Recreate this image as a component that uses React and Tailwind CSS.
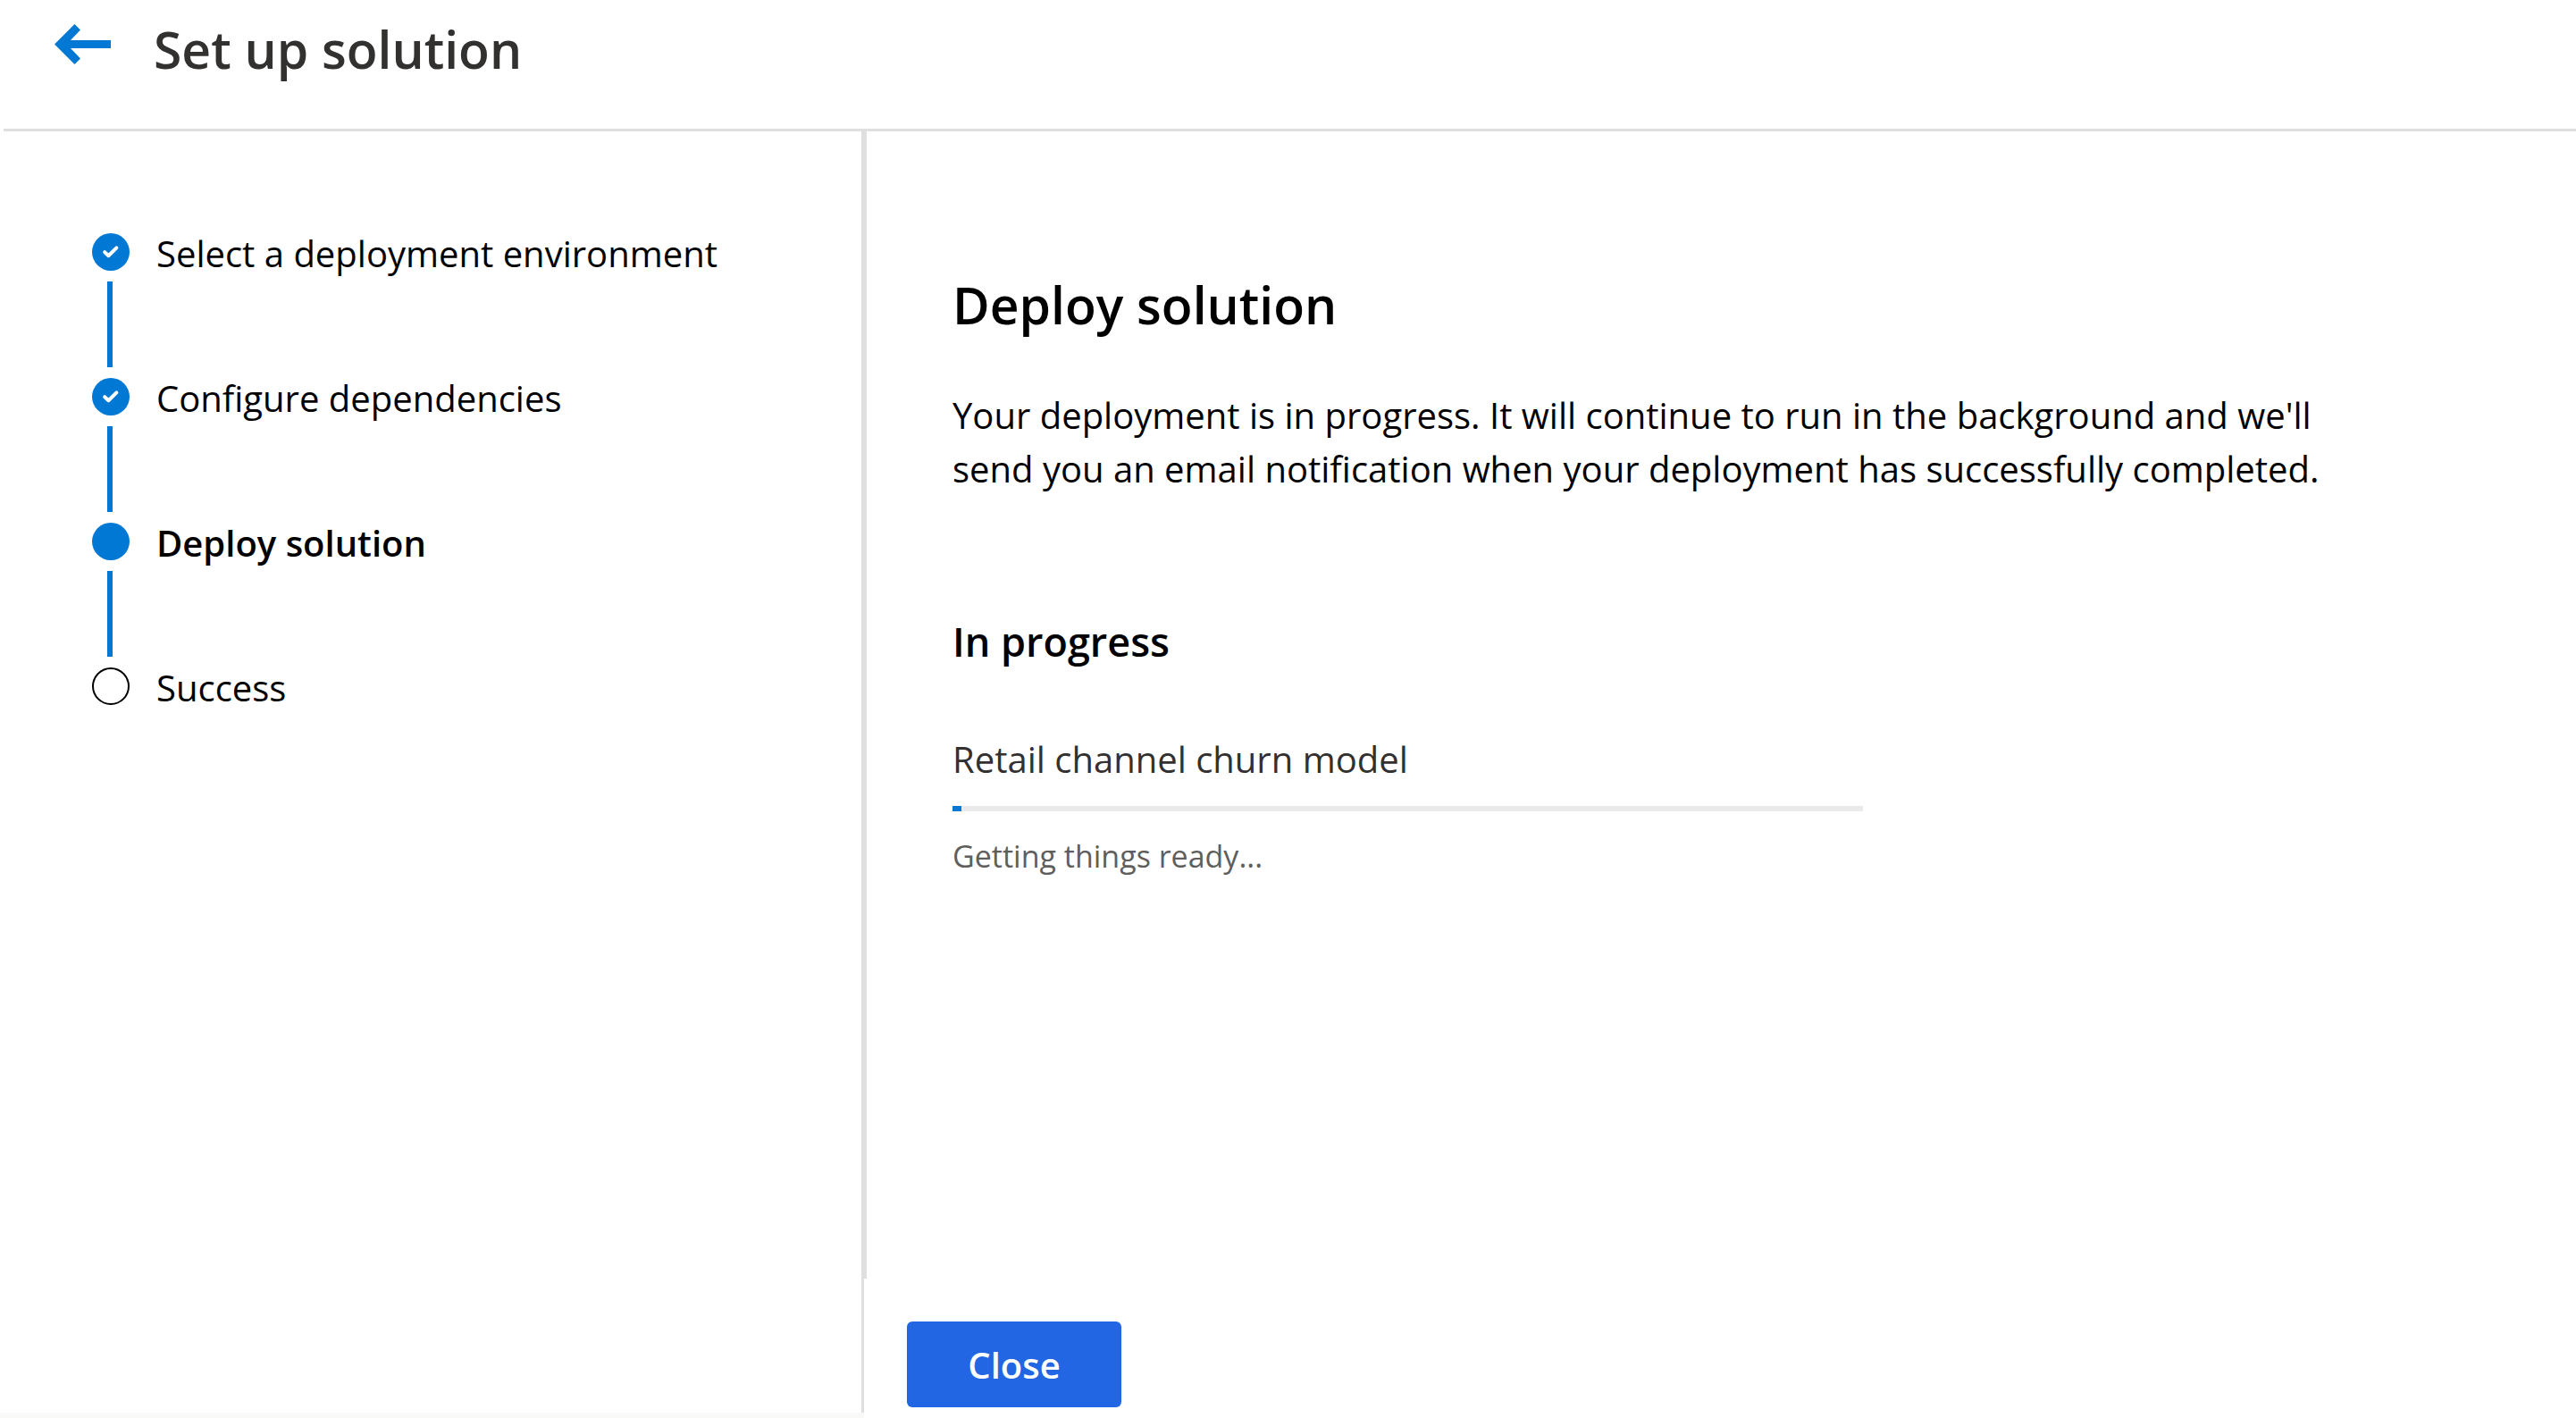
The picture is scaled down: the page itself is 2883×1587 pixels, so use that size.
import React from "react";

const steps = [
  { label: "Select a deployment environment", state: "done" },
  { label: "Configure dependencies", state: "done" },
  { label: "Deploy solution", state: "current" },
  { label: "Success", state: "upcoming" },
];

function BackArrow() {
  return (
    <svg viewBox="0 0 63 45" className="block h-[45px] w-[63px]" fill="#0078d4" aria-hidden="true">
      <polygon points="0,22.5 22.5,0 29,6.5 18,18 63,18 63,27 18,27 29,38.5 22.5,45" />
    </svg>
  );
}

function StepMarker({ state }) {
  if (state === "upcoming") {
    return <span className="block size-[42px] rounded-full border-2 border-black" />;
  }
  return (
    <span className="block size-[42px] rounded-full bg-[#0078d4]">
      {state === "done" && (
        <svg viewBox="0 0 42 42" className="block size-[42px]" fill="none" aria-hidden="true">
          <path
            d="M14.2 21.2L18.4 25.2L27.4 16.4"
            stroke="white"
            strokeWidth="4"
            strokeLinecap="round"
            strokeLinejoin="round"
          />
        </svg>
      )}
    </span>
  );
}

function Step({ label, state, last }) {
  return (
    <li className="flex gap-[30px]" aria-current={state === "current" ? "step" : undefined}>
      <div className="flex w-[42px] flex-col items-center">
        <StepMarker state={state} />
        {!last && <span className="my-3 mr-0.5 block h-24 w-1.5 bg-[#0078d4]" />}
      </div>
      <span
        className={
          state === "current"
            ? "text-[40px] leading-[45px] font-semibold"
            : "text-[40px] leading-[45px]"
        }
      >
        {label}
      </span>
    </li>
  );
}

export default function App() {
  const progress = 1;
  return (
    <div className="flex min-h-screen flex-col bg-white font-['Open_Sans',sans-serif] text-black">
      <header className="ml-1 flex items-start border-b-3 border-[#dfdfdf] pt-[25px] pb-[59px] pl-[57px]">
        <button type="button" aria-label="Back" className="mt-0.5 cursor-pointer">
          <BackArrow />
        </button>
        <h1 className="ml-12 text-[57px] leading-[60px] font-semibold text-[#323130]">
          Set up solution
        </h1>
      </header>

      <div className="flex flex-1">
        <aside className="flex w-[967px] shrink-0 flex-col">
          <nav aria-label="Setup steps" className="flex-1 border-r-3 border-[#dfdfdf] pt-[114px] pl-[103px]">
            <ol>
              {steps.map((step, i) => (
                <Step key={step.label} {...step} last={i === steps.length - 1} />
              ))}
            </ol>
          </nav>
          <div className="h-1.5 bg-[#f9f9f8]" />
        </aside>

        <main className="flex flex-1 flex-col">
          <section className="flex-1 border-l-3 border-[#e1dfdd] pt-[164px] pr-24 pl-24">
            <h2 className="text-[57px] leading-[60px] font-semibold">Deploy solution</h2>
            <p className="mt-16 max-w-[1560px] text-[40px] leading-[60px]">
              Your deployment is in progress. It will continue to run in the background and we'll
              send you an email notification when your deployment has successfully completed.
            </p>

            <h3 className="mt-[133px] text-[45px] leading-[60px] font-semibold">In progress</h3>
            <div className="mt-18 max-w-[1019px]">
              <p id="model-name" className="text-[40px] leading-[60px] text-[#323130]">
                Retail channel churn model
              </p>
              <div
                role="progressbar"
                aria-labelledby="model-name"
                aria-valuenow={progress}
                aria-valuemin={0}
                aria-valuemax={100}
                className="mt-[22px] h-1.5 bg-[#eaeaea]"
              >
                <div className="h-full bg-[#0078d4]" style={{ width: `${progress}%` }} />
              </div>
              <p className="mt-5 text-[34px] leading-[60px] text-[#605e5c]">
                Getting things ready...
              </p>
            </div>
          </section>

          <footer className="px-12 pt-12 pb-3">
            <button
              type="button"
              className="block h-24 w-60 cursor-pointer rounded-md bg-[#2266e3] pt-0.5 text-[40px] font-semibold text-white"
            >
              Close
            </button>
          </footer>
        </main>
      </div>
    </div>
  );
}
